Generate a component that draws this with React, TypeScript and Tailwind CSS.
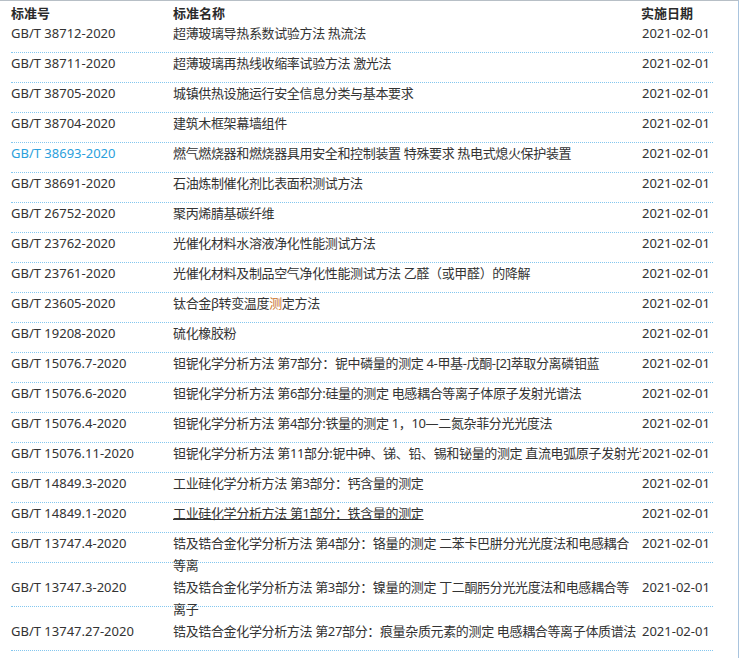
import React from "react";

type Row = {
  num: string;
  name: React.ReactNode;
  line2?: string;
  link?: boolean;
  underline?: boolean;
  tall?: boolean;
};

const rows: Row[] = [
  { num: "GB/T 38712-2020", name: "超薄玻璃导热系数试验方法 热流法" },
  { num: "GB/T 38711-2020", name: "超薄玻璃再热线收缩率试验方法 激光法" },
  { num: "GB/T 38705-2020", name: "城镇供热设施运行安全信息分类与基本要求" },
  { num: "GB/T 38704-2020", name: "建筑木框架幕墙组件" },
  { num: "GB/T 38693-2020", name: "燃气燃烧器和燃烧器具用安全和控制装置 特殊要求 热电式熄火保护装置", link: true },
  { num: "GB/T 38691-2020", name: "石油炼制催化剂比表面积测试方法" },
  { num: "GB/T 26752-2020", name: "聚丙烯腈基碳纤维" },
  { num: "GB/T 23762-2020", name: "光催化材料水溶液净化性能测试方法" },
  { num: "GB/T 23761-2020", name: "光催化材料及制品空气净化性能测试方法 乙醛（或甲醛）的降解" },
  {
    num: "GB/T 23605-2020",
    name: (
      <>
        钛合金β转变温度<span className="text-[#c8742a]">测</span>定方法
      </>
    ),
  },
  { num: "GB/T 19208-2020", name: "硫化橡胶粉" },
  { num: "GB/T 15076.7-2020", name: "钽铌化学分析方法 第7部分：铌中磷量的测定 4-甲基-戊酮-[2]萃取分离磷钼蓝" },
  { num: "GB/T 15076.6-2020", name: "钽铌化学分析方法 第6部分:硅量的测定 电感耦合等离子体原子发射光谱法" },
  { num: "GB/T 15076.4-2020", name: "钽铌化学分析方法 第4部分:铁量的测定 1，10—二氮杂菲分光光度法" },
  { num: "GB/T 15076.11-2020", name: "钽铌化学分析方法 第11部分:铌中砷、锑、铅、锡和铋量的测定 直流电弧原子发射光谱法" },
  { num: "GB/T 14849.3-2020", name: "工业硅化学分析方法 第3部分：钙含量的测定" },
  { num: "GB/T 14849.1-2020", name: "工业硅化学分析方法 第1部分：铁含量的测定", underline: true },
  {
    num: "GB/T 13747.4-2020",
    name: "锆及锆合金化学分析方法 第4部分：铬量的测定 二苯卡巴肼分光光度法和电感耦合",
    line2: "等离",
  },
  {
    num: "GB/T 13747.3-2020",
    name: "锆及锆合金化学分析方法 第3部分：镍量的测定 丁二酮肟分光光度法和电感耦合等",
    line2: "离子",
    tall: true,
  },
  {
    num: "GB/T 13747.27-2020",
    name: "锆及锆合金化学分析方法 第27部分：痕量杂质元素的测定 电感耦合等离子体质谱法",
    tall: true,
  },
];

export default function App() {
  return (
    <div
      className="w-[739px] h-[658px] bg-white border-t border-r border-t-[#b7bfc6] border-r-[#a9c4de] text-[13px] text-[#333]"
      style={{ fontFamily: '"Noto Sans", "Noto Sans CJK SC", sans-serif' }}
    >
      <div className="ml-[11px] w-[702px]">
        <div className="flex h-[22px] pt-[1px] leading-[22px] font-bold text-[#2a2a2a]">
          <div className="w-[162px]">标准号</div>
          <div className="w-[468px]">标准名称</div>
          <div className="w-[72px]">实施日期</div>
        </div>
        {rows.map((r) => (
          <div
            key={r.num}
            className={`flex border-b border-dotted border-b-[#84c7ef] ${
              r.tall ? "h-[44px] pt-[14px]" : "h-[30px]"
            }`}
          >
            <div
              className={`w-[162px] h-[22px] leading-[20px] whitespace-nowrap ${
                r.link ? "text-[#2b9fdc]" : ""
              }`}
            >
              {r.num}
            </div>
            <div className="w-[468px] tracking-[-0.35px]">
              <div
                className={`h-[22px] leading-[20px] whitespace-nowrap overflow-hidden ${
                  r.underline ? "underline decoration-[#333]" : ""
                }`}
              >
                {r.name}
              </div>
              {r.line2 && (
                <div className="h-[22px] leading-[20px] whitespace-nowrap">{r.line2}</div>
              )}
            </div>
            <div className="w-[72px] h-[22px] leading-[20px] pl-[1px] whitespace-nowrap">
              2021-02-01
            </div>
          </div>
        ))}
      </div>
    </div>
  );
}
